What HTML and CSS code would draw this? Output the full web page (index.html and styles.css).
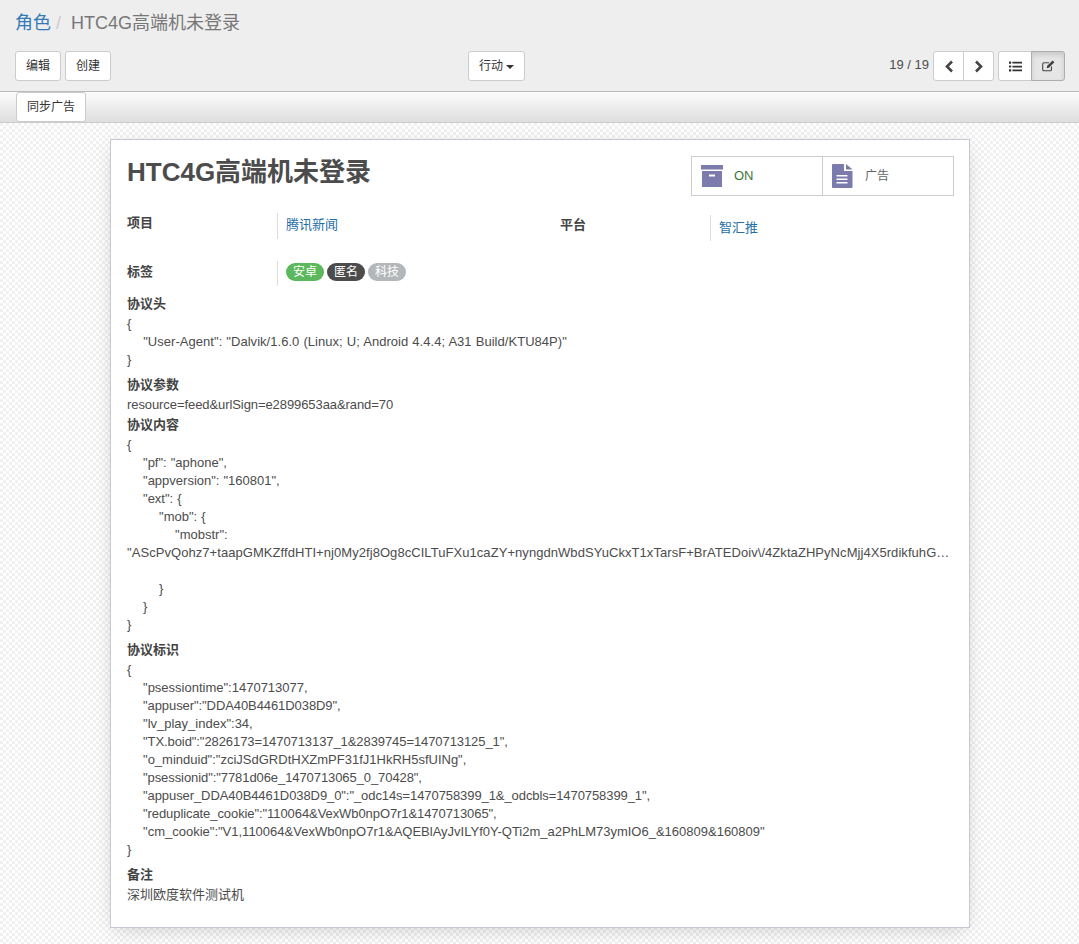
FILE: index.html
```html
<!DOCTYPE html>
<html lang="zh">
<head>
<meta charset="utf-8">
<title>HTC4G高端机未登录</title>
<link rel="stylesheet" href="styles.css">
</head>
<body>
<header class="panel">
  <ol class="crumbs">
    <li><a href="#">角色</a></li>
    <li class="sep">/</li>
    <li class="current">HTC4G高端机未登录</li>
  </ol>
  <div class="toolbar">
    <div class="tool-left">
      <button class="btn">编辑</button>
      <button class="btn">创建</button>
    </div>
    <div class="tool-mid">
      <button class="btn">行动 <span class="caret"></span></button>
    </div>
    <div class="tool-right">
      <span class="pager">19 / 19</span>
      <div class="group">
        <button class="btn icon"><svg width="10" height="13" viewBox="0 0 10 13"><path d="M8 1.500 3 6.500l5 5" fill="none" stroke="#444" stroke-width="2.600"/></svg></button>
        <button class="btn icon"><svg width="10" height="13" viewBox="0 0 10 13"><path d="M2 1.500l5 5-5 5" fill="none" stroke="#444" stroke-width="2.600"/></svg></button>
      </div>
      <div class="group views">
        <button class="btn icon wide"><svg width="13" height="11" viewBox="0 0 13 11"><path d="M0 .5h2.200v2.200H0zM0 4.400h2.200v2.200H0zM0 8.300h2.200v2.200H0zM3.400 .8H13v1.700H3.400zM3.400 4.700H13v1.700H3.400zM3.400 8.600H13v1.700H3.400z" fill="#333"/></svg></button>
        <button class="btn icon wide active"><svg width="13" height="12" viewBox="0 0 13 12"><path d="M9.500 6.500V9.500a1.300 1.300 0 0 1-1.300 1.300H2A1.300 1.300 0 0 1 .7 9.500V4A1.300 1.300 0 0 1 2 2.700h5" fill="none" stroke="#444" stroke-width="1.100"/><path d="M10.600.4 12.400 2.200 7 7.700 4.700 8.200 5.200 5.800Z" fill="#444"/></svg></button>
      </div>
    </div>
  </div>
</header>
<div class="statusbar"><button class="btn flat">同步广告</button></div>
<main class="content">
  <article class="sheet">
    <div class="top">
      <h1>HTC4G高端机未登录</h1>
      <div class="stats">
        <div class="stat">
          <svg width="22" height="22" viewBox="0 0 22 22"><path d="M0 0h22v4.500H0zM1 6h20v16H1zM8 9.500v2h6v-2z" fill="#7c7bad" fill-rule="evenodd"/></svg>
          <span class="on">ON</span>
        </div>
        <div class="stat">
          <svg width="22" height="24" viewBox="0 0 22 24"><path d="M0 1a1 1 0 0 1 1-1h11v7h8.500v16a1 1 0 0 1-1 1H1a1 1 0 0 1-1-1zM4.500 11v1.500h11V11zM4.500 14.500V16h11v-1.500zM4.500 18v1.500h11V18z" fill="#7c7bad" fill-rule="evenodd"/><path d="M14 0l6.500 5.500H14z" fill="#7c7bad"/></svg>
          <span>广告</span>
        </div>
      </div>
    </div>
    <div class="fields">
      <div class="field first"><b>项目</b><div class="value"><a href="#">腾讯新闻</a></div></div>
      <div class="field second"><b>平台</b><div class="value"><a href="#">智汇推</a></div></div>
      <div class="field tags"><b>标签</b><div class="value">
        <span class="tag green">安卓</span><span class="tag dark">匿名</span><span class="tag grey">科技</span>
      </div></div>
    </div>
    <section class="block first-block">
      <h2>协议头</h2>
      <pre class="loose">{
    "User-Agent": "Dalvik/1.6.0 (Linux; U; Android 4.4.4; A31 Build/KTU84P)"
}</pre>
    </section>
    <section class="block">
      <h2>协议参数</h2>
      <pre class="dense">resource=feed&amp;urlSign=e2899653aa&amp;rand=70</pre>
    </section>
    <section class="block after-single">
      <h2>协议内容</h2>
      <pre>{
    "pf": "aphone",
    "appversion": "160801",
    "ext": {
        "mob": {
            "mobstr":
<span class="clip">"AScPvQohz7+taapGMKZffdHTI+nj0My2fj8Og8cCILTuFXu1caZY+nyngdnWbdSYuCkxT1xTarsF+BrATEDoiv\/4ZktaZHPyNcMjj4X5rdikfuhGwT1xTarsF+BrATEDoivV4ZktaZHPyNcMjj4X5rdikfuhG"</span>
        }
    }
}</pre>
    </section>
    <section class="block">
      <h2>协议标识</h2>
      <pre>{
    "psessiontime":1470713077,
    <span class="dense">"appuser":"DDA40B4461D038D9",</span>
    "lv_play_index":34,
    <span class="dense">"TX.boid":"2826173=1470713137_1&amp;2839745=1470713125_1",</span>
    "o_minduid":"zciJSdGRDtHXZmPF31fJ1HkRH5sfUINg",
    <span class="dense">"psessionid":"7781d06e_1470713065_0_70428",</span>
    <span class="dense">"appuser_DDA40B4461D038D9_0":"_odc14s=1470758399_1&amp;_odcbls=1470758399_1",</span>
    <span class="dense">"reduplicate_cookie":"110064&amp;VexWb0npO7r1&amp;1470713065",</span>
    "cm_cookie":"V1,110064&amp;VexWb0npO7r1&amp;AQEBlAyJvILYf0Y-QTi2m_a2PhLM73ymIO6_&amp;160809&amp;160809"
}</pre>
    </section>
    <section class="block">
      <h2>备注</h2>
      <pre>深圳欧度软件测试机</pre>
    </section>
  </article>
</main>
</body>
</html>
```
FILE: styles.css
```css
* { box-sizing: border-box; }
html, body { margin: 0; height: 944px; overflow: hidden; }
body {
  font-family: "Liberation Sans", "Noto Sans CJK SC", sans-serif;
  font-size: 13px;
  line-height: 18px;
  color: #4c4c4c;
  background-color: #fff;
  background-image: conic-gradient(#f0f0f0 25%, #fff 0 50%, #f0f0f0 0 75%, #fff 0);
  background-size: 6px 6px;
}
a { color: #256fa8; text-decoration: none; }
.panel {
  height: 92px;
  padding: 0 14px 0 15px;
  background: #efeeef;
  border-bottom: 1px solid #bbb;
}
.crumbs {
  display: flex;
  margin: 0;
  padding: 10px 0 0;
  list-style: none;
  font-size: 18px;
  line-height: 26px;
  color: #777;
}
.crumbs a { color: #337ab7; }
.sep { margin: 0 10px 0 5px; color: #ccc; }
.toolbar {
  display: grid;
  grid-template-columns: 453px auto 1fr;
  align-items: center;
  margin-top: 15px;
}
.tool-left { display: flex; gap: 4px; }
.tool-mid { display: flex; }
.tool-right { display: flex; justify-content: flex-end; align-items: center; }
.btn {
  height: 30px;
  padding: 0 10px;
  border: 1px solid #ccc;
  border-radius: 3px;
  background: #fff;
  color: #333;
  font: 12px/18px "Liberation Sans", "Noto Sans CJK SC", sans-serif;
}
.caret {
  display: inline-block;
  width: 0;
  height: 0;
  vertical-align: middle;
  border-top: 4px solid #333;
  border-left: 4px solid transparent;
  border-right: 4px solid transparent;
}
.pager { margin-right: 4px; position: relative; top: -1px; }
.group { display: flex; }
.group .btn { border-radius: 0; margin-left: -1px; }
.group .btn:first-child { border-radius: 3px 0 0 3px; margin-left: 0; }
.group .btn:last-child { border-radius: 0 3px 3px 0; }
.icon { width: 31px; padding: 0; display: flex; align-items: center; justify-content: center; }
.wide { width: 34px; }
.views { margin-left: 4px; }
.active { background: #e6e6e6; border-color: #adadad; box-shadow: inset 0 3px 5px rgba(0,0,0,.125); }
.statusbar {
  height: 31px;
  padding: 0 16px;
  background: linear-gradient(#fcfcfc, #dedede);
  border-bottom: 1px solid #ccc;
}
.flat { display: block; }
.content { padding: 16px 109px 0 110px; }
.sheet {
  height: 789px;
  padding: 16px 15px 0 16px;
  background: #fff;
  border: 1px solid #c8c8d3;
  box-shadow: 0 5px 20px -5px rgba(0,0,0,.2);
}
.top { display: flex; justify-content: space-between; align-items: flex-start; }
h1 {
  margin: 0;
  font-size: 26px;
  line-height: 32px;
  font-weight: bold;
  color: #4c4c4c;
}
.stats { display: flex; border: 1px solid #ccc; height: 40px; width: 263px; }
.stat {
  flex: 1;
  display: flex;
  align-items: center;
  gap: 11px;
  padding-left: 9px;
  font-size: 12px;
  color: #666;
}
.stat + .stat { border-left: 1px solid #ccc; }
.on { color: #3c763d; font-size: 13px; }
.fields {
  display: grid;
  grid-template-columns: 150px 283px 150px 1fr;
  margin-top: 17px;
}
.field { display: contents; }
.field b { color: #444; padding-top: 1px; }
.value { border-left: 1px solid #ddd; padding: 3px 0 0 8px; height: 26px; }
.second b { padding-top: 3px; }
.second .value { margin-top: 2px; padding-top: 4px; }
.tags b, .tags .value { margin-top: 20px; }
.tags b { padding-top: 2px; }
.tags .value { height: 25px; display: flex; gap: 3px; align-items: flex-start; padding-top: 2px; }
.tag {
  height: 18px;
  padding: 0 7px;
  border-radius: 9px;
  color: #fff;
  font-size: 12px;
  line-height: 18px;
}
.green { background: #5cb85c; }
.dark { background: #4c4c4c; }
.grey { background: #b3b7ba; }
.block { margin-top: 7px; }
.first-block { margin-top: 9px; }
.after-single { margin-top: 2px; }
h2 { margin: 0 0 2px; font-size: 13px; line-height: 18px; font-weight: bold; color: #444; }
pre {
  margin: 0;
  font: inherit;
  white-space: pre-wrap;
  word-spacing: .39px;
  color: #4c4c4c;
}
.dense { letter-spacing: -.08px; }
.loose { letter-spacing: .04px; }
.clip {
  display: block;
  margin-right: 4px;
  letter-spacing: .06px;
  white-space: nowrap;
  overflow: hidden;
  text-overflow: ellipsis;
}
```
